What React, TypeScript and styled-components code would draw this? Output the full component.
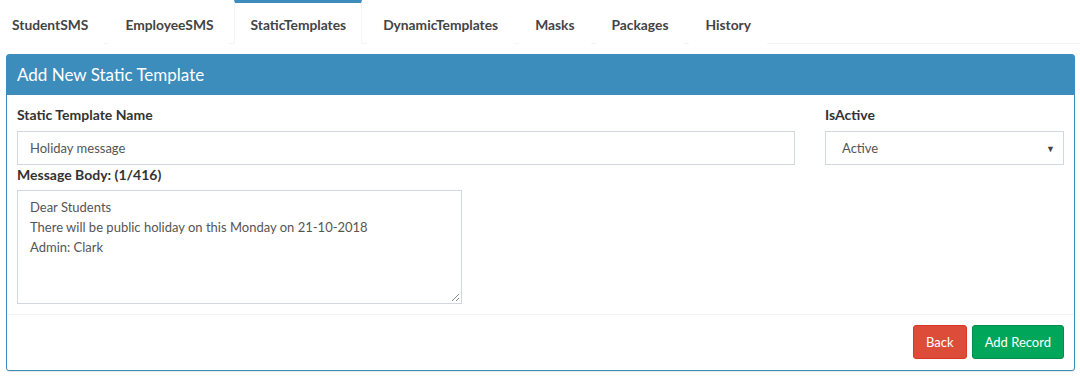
import React from "react";
import styled, { createGlobalStyle } from "styled-components";

const Global = createGlobalStyle`
  html, body { margin: 0; padding: 0; background: #fff; }
  body { font-family: Lato, "Open Sans", sans-serif; font-size: 14px; color: #333; }
  * { box-sizing: border-box; }
`;

const Page = styled.div`
  width: 1080px;
  height: 376px;
  background: #fff;
  overflow: hidden;
`;

const TabBar = styled.ul`
  display: flex;
  list-style: none;
  margin: 0 0 10px -4px;
  padding: 0;
  height: 44px;
  border-bottom: 1px solid #f4f4f4;
`;

const Tab = styled.li<{ $active?: boolean }>`
  display: flex;
  align-items: center;
  margin-right: 5px;
  margin-bottom: -1px;
  padding: 2px 15px 0;
  border: 1px solid ${(p) => (p.$active ? "#f4f4f4" : "transparent")};
  border-top: 3px solid ${(p) => (p.$active ? "#3c8dbc" : "transparent")};
  border-bottom: 1px solid ${(p) => (p.$active ? "#fff" : "transparent")};
  background: #fff;
  font-weight: 700;
  font-size: 13.8px;
  color: #444;
`;

const Box = styled.div`
  margin: 0 5px 0 6px;
  border: 1px solid #3c8dbc;
  border-radius: 3px;
  background: #fff;
  box-shadow: 0 1px 1px rgba(0, 0, 0, 0.1);
`;

const BoxHeader = styled.div`
  height: 40px;
  background: #3c8dbc;
  color: #fff;
  display: flex;
  align-items: center;
  padding: 0 10px 2px;
  font-size: 17px;
`;

const BoxBody = styled.div`
  padding: 10px;
  display: grid;
  grid-template-columns: 778px 239px;
  column-gap: 30px;
  align-items: start;
`;

const Field = styled.div`
  display: flex;
  flex-direction: column;
`;

const Label = styled.label<{ $gap?: number }>`
  display: block;
  font-weight: 700;
  font-size: 14px;
  line-height: 20px;
  margin-bottom: ${(p) => p.$gap ?? 6}px;
  color: #333;
`;

const Input = styled.div`
  height: 34px;
  border: 1px solid #d2d6de;
  padding: 0 12px;
  display: flex;
  align-items: center;
  font-size: 13px;
  color: #555;
`;

const Select = styled(Input)`
  justify-content: space-between;
  padding-right: 8px;
  padding-left: 16px;
`;

const Caret = styled.span`
  font-size: 9px;
  color: #444;
`;

const Wide = styled.div`
  grid-column: 1 / span 2;
  display: flex;
  flex-direction: column;
`;

const TextArea = styled.div`
  position: relative;
  width: 445px;
  height: 114px;
  border: 1px solid #d2d6de;
  padding: 6px 12px;
  font-size: 13px;
  line-height: 20px;
  color: #555;
`;

const Grip = styled.svg`
  position: absolute;
  right: 1px;
  bottom: 1px;
`;

const BoxFooter = styled.div`
  border-top: 1px solid #f4f4f4;
  padding: 10px 10px 11px;
  display: flex;
  justify-content: flex-end;
  gap: 5px;
`;

const Button = styled.button<{ $variant: "danger" | "success" }>`
  height: 34px;
  padding: 0 12px;
  border-radius: 3px;
  font-family: inherit;
  font-size: 13px;
  color: #fff;
  background: ${(p) => (p.$variant === "danger" ? "#dd4b39" : "#00a65a")};
  border: 1px solid ${(p) => (p.$variant === "danger" ? "#d73925" : "#008d4c")};
`;

const tabs = [
  "StudentSMS",
  "EmployeeSMS",
  "StaticTemplates",
  "DynamicTemplates",
  "Masks",
  "Packages",
  "History",
];

export default function App() {
  return (
    <Page>
      <Global />
      <TabBar>
        {tabs.map((t) => (
          <Tab key={t} $active={t === "StaticTemplates"}>
            {t}
          </Tab>
        ))}
      </TabBar>
      <Box>
        <BoxHeader>Add New Static Template</BoxHeader>
        <BoxBody>
          <Field>
            <Label>Static Template Name</Label>
            <Input>Holiday message</Input>
          </Field>
          <Field>
            <Label>IsActive</Label>
            <Select>
              <span>Active</span>
              <Caret>▼</Caret>
            </Select>
          </Field>
          <Wide>
            <Label $gap={5}>Message Body: (1/416)</Label>
            <TextArea>
              Dear Students
              <br />
              There will be public holiday on this Monday on 21-10-2018
              <br />
              Admin: Clark
              <Grip width="9" height="9" viewBox="0 0 9 9">
                <line x1="8" y1="1" x2="1" y2="8" stroke="#888" strokeWidth="1" />
                <line x1="8" y1="5" x2="5" y2="8" stroke="#888" strokeWidth="1" />
              </Grip>
            </TextArea>
          </Wide>
        </BoxBody>
        <BoxFooter>
          <Button $variant="danger">Back</Button>
          <Button $variant="success">Add Record</Button>
        </BoxFooter>
      </Box>
    </Page>
  );
}
